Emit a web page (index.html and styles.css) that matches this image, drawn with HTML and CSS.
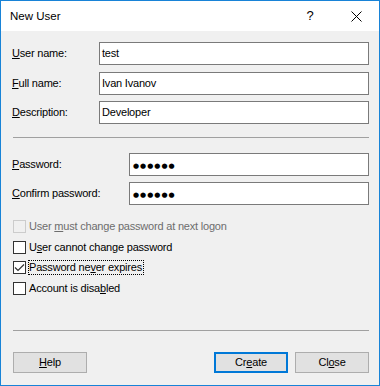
FILE: index.html
```
<!DOCTYPE html>
<html lang="en">
<head>
  <meta charset="UTF-8" />
  <title>New User</title>
  <link rel="stylesheet" href="styles.css">
</head>
<body>
  <div class="window">
    <div class="titlebar">
      <div class="title">New User</div>
      <div class="caption-btn help-btn">?</div>
      <div class="caption-btn close-btn">
        <svg width="11" height="11" viewBox="0 0 11 11">
          <path d="M0.5 0.5 L10.5 10.5 M10.5 0.5 L0.5 10.5" stroke="#000" stroke-width="1" fill="none"/>
        </svg>
      </div>
    </div>

    <div class="content">
      <div class="fields fields-user">
        <div class="label"><u>U</u>ser name:</div>
        <div class="textbox">test</div>
        <div class="label"><u>F</u>ull name:</div>
        <div class="textbox">Ivan Ivanov</div>
        <div class="label"><u>D</u>escription:</div>
        <div class="textbox">Developer</div>
      </div>

      <div class="separator"></div>

      <div class="fields fields-pass">
        <div class="label"><u>P</u>assword:</div>
        <div class="textbox"><span class="dots">●●●●●●</span></div>
        <div class="label"><u>C</u>onfirm password:</div>
        <div class="textbox"><span class="dots">●●●●●●</span></div>
      </div>

      <div class="checks">
        <div class="check disabled">
          <span class="box"></span>
          <span class="check-text">User <u>m</u>ust change password at next logon</span>
        </div>
        <div class="check">
          <span class="box"></span>
          <span class="check-text">U<u>s</u>er cannot change password</span>
        </div>
        <div class="check">
          <span class="box">
            <svg width="11" height="11" viewBox="0 0 11 11">
              <path d="M1 5.5 L4 8.5 L10 2.5" stroke="#333" stroke-width="1.2" fill="none"/>
            </svg>
          </span>
          <span class="check-text focused">Password ne<u>v</u>er expires</span>
        </div>
        <div class="check">
          <span class="box"></span>
          <span class="check-text">Account is disa<u>b</u>led</span>
        </div>
      </div>

      <div class="separator separator-bottom"></div>

      <div class="buttons">
        <div class="button"><u>H</u>elp</div>
        <div class="spacer"></div>
        <div class="button default">Cr<u>e</u>ate</div>
        <div class="button">Cl<u>o</u>se</div>
      </div>
    </div>
  </div>
</body>
</html>
```

FILE: styles.css
```
body {
  margin: 0;
  padding: 0;
  font-family: "Liberation Sans", Arial, sans-serif;
  font-size: 11px;
  letter-spacing: -0.2px;
  color: #000;
  background: #fff;
}
.window {
  width: 380px;
  height: 386px;
  box-sizing: border-box;
  border: 1px solid #1883d7;
  background: #f0f0f0;
  display: flex;
  flex-direction: column;
}
.titlebar {
  height: 30px;
  background: #fff;
  display: flex;
  align-items: center;
}
.title {
  flex: 1;
  padding-left: 9px;
  font-size: 11.5px;
  letter-spacing: 0;
  padding-bottom: 1px;
}
.caption-btn {
  width: 46px;
  height: 30px;
  display: flex;
  align-items: center;
  justify-content: center;
}
.help-btn {
  font-size: 13px;
  padding-bottom: 1px;
  box-sizing: border-box;
}
.close-btn svg {
  display: block;
}
.content {
  flex: 1;
  padding: 11px 10px 0 11px;
}
.fields {
  display: grid;
  grid-auto-rows: 23px;
  align-items: center;
}
.fields-user {
  grid-template-columns: 87px 1fr;
  row-gap: 6.5px;
}
.fields-pass {
  grid-template-columns: 117px 1fr;
  row-gap: 6px;
  margin-top: 15px;
}
.label {
  line-height: 23px;
}
.textbox {
  height: 23px;
  box-sizing: border-box;
  border: 1px solid #7a7a7a;
  background: #fff;
  padding-left: 2px;
  line-height: 20px;
}
.dots {
  font-family: "DejaVu Sans", sans-serif;
  font-size: 7px;
  letter-spacing: 1px;
  padding-left: 1px;
}
.separator {
  height: 1px;
  background: #a0a0a0;
  margin: 13px 0 0 1px;
}
.checks {
  margin-top: 15px;
  display: flex;
  flex-direction: column;
  gap: 7.67px;
}
.check {
  display: flex;
  align-items: center;
  height: 13px;
}
.box {
  width: 13px;
  height: 13px;
  box-sizing: border-box;
  border: 1px solid #333;
  background: #fff;
  margin-left: 1px;
  margin-right: 2px;
  display: flex;
  align-items: center;
  justify-content: center;
}
.box svg {
  display: block;
}
.check-text {
  border: 1px dotted transparent;
  line-height: 13px;
  padding: 0 1px 0 0;
}
.check-text.focused {
  border-color: #000;
}
.check.disabled .box {
  border-color: #ccc;
  background: #f0f0f0;
}
.check.disabled .check-text {
  color: #6d6d6d;
}
.separator-bottom {
  margin-top: 35px;
}
.buttons {
  display: flex;
  gap: 7px;
  margin-top: 21px;
  padding-left: 1px;
}
.spacer {
  flex: 1;
}
.button {
  width: 74px;
  height: 21px;
  box-sizing: border-box;
  border: 1px solid #adadad;
  background: #e1e1e1;
  text-align: center;
  line-height: 19px;
}
.button.default {
  border: 2px solid #0078d7;
  line-height: 17px;
}
```
